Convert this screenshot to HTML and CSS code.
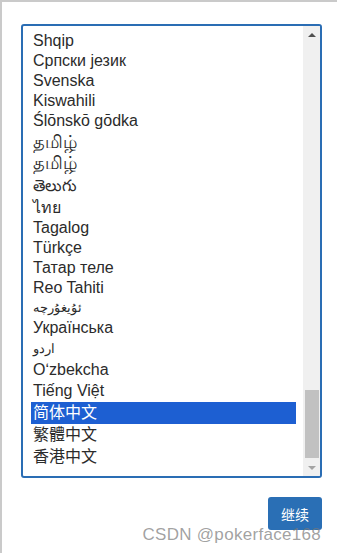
FILE: index.html
```html
<!DOCTYPE html>
<html lang="zh-CN">
<head>
	<meta charset="UTF-8">
	<meta name="viewport" content="width=device-width, initial-scale=1.0" />
	<title>选择语言</title>
	<link rel="stylesheet" href="styles.css">
</head>
<body>

	<div class="page">
		<div class="lang-box">
			<ul class="lang-list">
				<li>Shqip</li>
				<li>Српски језик</li>
				<li>Svenska</li>
				<li>Kiswahili</li>
				<li>Ślōnskō gōdka</li>
				<li class="h22 big">தமிழ்</li>
				<li class="h21 big">தமிழ்</li>
				<li class="h23">తెలుగు</li>
				<li class="h21">ไทย</li>
				<li>Tagalog</li>
				<li>Türkçe</li>
				<li>Татар теле</li>
				<li>Reo Tahiti</li>
				<li class="small">ئۇيغۇرچە</li>
				<li>Українська</li>
				<li class="h22 small">اردو</li>
				<li>Oʻzbekcha</li>
				<li class="h22">Tiếng Việt</li>
				<li class="h22 active">简体中文</li>
				<li class="h22">繁體中文</li>
				<li class="h22">香港中文</li>
			</ul>
			<div class="scrollbar">
				<span class="arrow up"></span>
				<div class="track"><div class="thumb"></div></div>
				<span class="arrow down"></span>
			</div>
		</div>

		<div class="actions">
			<button class="btn">继续</button>
		</div>

		<div class="watermark">CSDN @pokerface168</div>
	</div>

</body>
</html>
```

FILE: styles.css
```css
body{
	margin:0;
	background:#fff;
	font-family:"Liberation Sans", Arial, "Noto Sans CJK SC", sans-serif;
	color:#2b2b2b;
}
.page{
	position:relative;
	height:551px;
	border-top:2px solid #cacaca;
	border-left:2px solid #cacaca;
	padding:22px 15px 0 19px;
}
.lang-box{
	display:flex;
	height:450px;
	border:2px solid #2a6db4;
	border-radius:3px;
	overflow:hidden;
}
.lang-list{
	flex:1;
	margin:0;
	padding:5px 7px 0 8px;
	list-style:none;
	font-size:16px;
}
.lang-list li{
	height:20px;
	line-height:20px;
	padding-left:2px;
	white-space:nowrap;
	overflow:hidden;
}
.lang-list li.h21{
	height:21px;
	line-height:21px;
}
.lang-list li.h22{
	height:22px;
	line-height:22px;
}
.lang-list li.h23{
	height:23px;
	line-height:23px;
}
.lang-list li.big{
	font-size:18px;
}
.lang-list li.small{
	font-size:13px;
}
.lang-list li.active{
	background:#1d5fd2;
	color:#fff;
}
.scrollbar{
	width:17px;
	background:#f0f0f0;
	display:flex;
	flex-direction:column;
	align-items:center;
}
.arrow{
	height:17px;
	width:17px;
	display:flex;
	align-items:center;
	justify-content:center;
}
.arrow::before{
	content:"";
	border-left:4px solid transparent;
	border-right:4px solid transparent;
}
.arrow.up::before{
	border-bottom:4px solid #505050;
}
.arrow.down::before{
	border-top:4px solid #a3a3a3;
}
.track{
	flex:1;
	width:100%;
	display:flex;
	flex-direction:column;
	justify-content:flex-end;
	align-items:center;
	padding-bottom:1px;
}
.thumb{
	width:14px;
	height:68px;
	background:#c1c1c1;
}
.actions{
	display:flex;
	justify-content:flex-end;
	margin-top:19px;
}
.btn{
	width:54px;
	height:33px;
	border:0;
	border-radius:3px;
	background:#2a6fb5;
	color:#fff;
	font-family:"Noto Sans CJK SC", sans-serif;
	font-size:14px;
	padding:0;
}
.watermark{
	position:absolute;
	right:16px;
	top:523px;
	font-family:"Liberation Sans", Arial, sans-serif;
	font-size:17px;
	color:rgba(120,120,120,0.7);
	letter-spacing:0.3px;
}
```
